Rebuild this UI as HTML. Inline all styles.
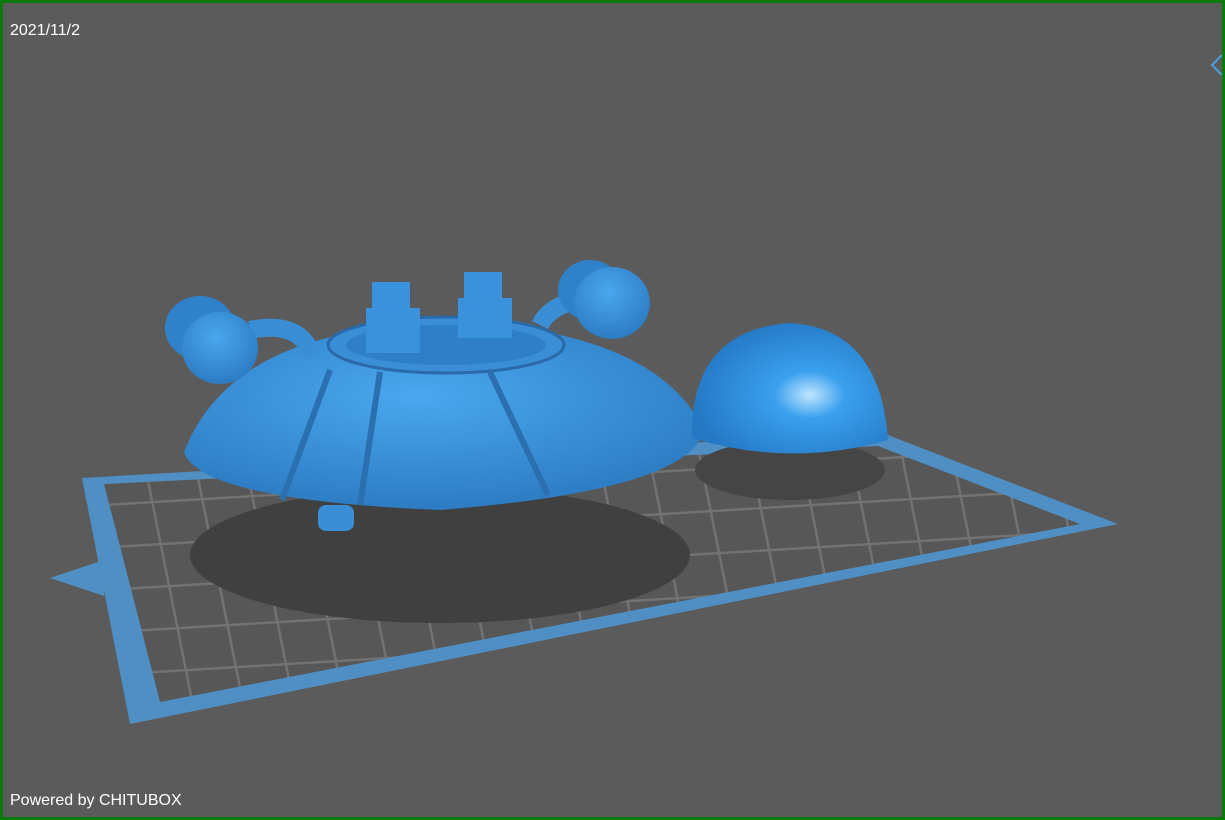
<!DOCTYPE html>
<html><head><style>
html,body{margin:0;padding:0;background:#5b5b5b;}
.f{position:relative;width:1219px;height:814px;border:3px solid #0a7a0a;background:#5b5b5b;overflow:hidden;font-family:"Liberation Sans",sans-serif;color:#fff;}
.t{position:absolute;font-size:16px;}
</style></head><body>
<div class="f">
<svg width="1219" height="814" style="position:absolute;left:0;top:0" viewBox="3 3 1219 814">
<defs>
<radialGradient id="g1" cx="0.45" cy="0.35" r="0.7"><stop offset="0" stop-color="#4aa8ee"/><stop offset="1" stop-color="#2a78c0"/></radialGradient>
<radialGradient id="g2" cx="0.6" cy="0.55" r="0.6"><stop offset="0" stop-color="#bfe6ff"/><stop offset="0.3" stop-color="#3aa0ee"/><stop offset="1" stop-color="#2478c4"/></radialGradient>
<pattern id="grid" width="50" height="42" patternUnits="userSpaceOnUse" patternTransform="matrix(1 -0.06 0.2 1 0 0)"><rect width="50" height="42" fill="#575757"/><path d="M0 0H50M0 0V42" stroke="#727272" stroke-width="5"/></pattern>
</defs>
<polygon points="82,478 880,432 1118,524 130,724" fill="#4f8fc4"/>
<polygon points="104,484 878,446 1080,524 160,702" fill="url(#grid)"/>
<polygon points="50,578 104,560 104,596" fill="#4f8fc4"/>
<ellipse cx="440" cy="555" rx="250" ry="68" fill="#404040"/>
<ellipse cx="790" cy="470" rx="95" ry="30" fill="#454545"/>
<path d="M184,452 Q220,360 340,335 L560,335 Q670,360 704,430 Q690,490 440,510 Q200,500 184,452 Z" fill="url(#g1)"/>
<ellipse cx="446" cy="345" rx="118" ry="28" fill="#3a8ed6" stroke="#2a6aa8" stroke-width="3"/>
<ellipse cx="446" cy="345" rx="100" ry="20" fill="#2e7fc8"/>
<path d="M330,370 L282,500 M490,372 L548,495 M380,372 L360,505" stroke="#2b6fae" stroke-width="6"/>
<rect x="372" y="282" width="38" height="26" fill="#3a92dc"/>
<rect x="366" y="308" width="54" height="45" fill="#3a92dc"/>
<rect x="464" y="272" width="38" height="26" fill="#3a92dc"/>
<rect x="458" y="298" width="54" height="40" fill="#3a92dc"/>
<path d="M250,330 Q300,320 312,355" stroke="#3a8ed6" stroke-width="18" fill="none"/>
<path d="M580,300 Q550,305 540,325" stroke="#3a8ed6" stroke-width="18" fill="none"/>
<ellipse cx="200" cy="328" rx="35" ry="32" fill="#2f82ca"/>
<ellipse cx="220" cy="348" rx="38" ry="36" fill="url(#g1)"/>
<ellipse cx="590" cy="290" rx="32" ry="30" fill="#2f82ca"/>
<ellipse cx="612" cy="303" rx="38" ry="36" fill="url(#g1)"/>
<rect x="318" y="505" width="36" height="26" rx="8" fill="#3a8ed6"/>
<path d="M692,438 Q690,330 790,323 Q880,328 888,440 Q790,468 692,438 Z" fill="url(#g2)"/>
<path d="M1222,55 L1212,65 L1222,75" stroke="#4aa0e0" stroke-width="2" fill="none"/>
</svg>
<div class="t" style="left:7px;top:19px">2021/11/2</div>
<div class="t" style="left:7px;top:789px">Powered by CHITUBOX</div>
</div>
</body></html>
